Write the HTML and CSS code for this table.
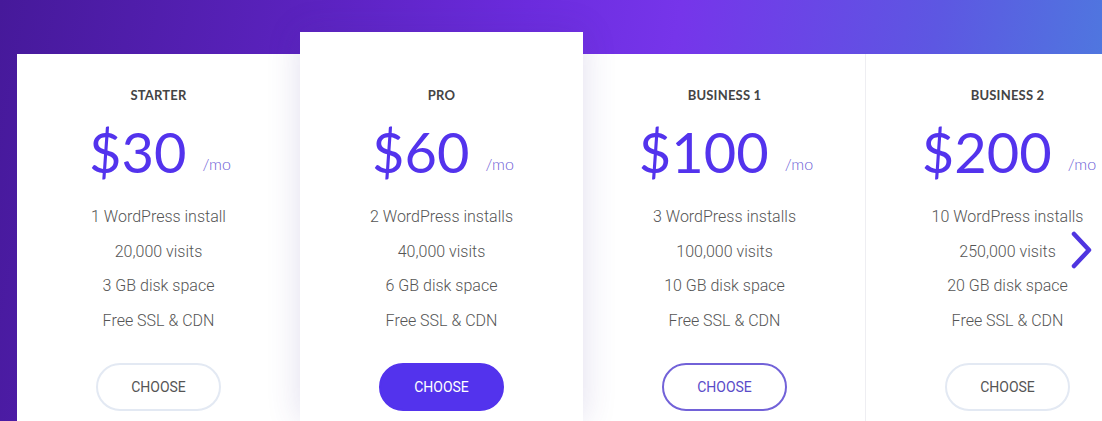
FILE: index.html
```html
<!DOCTYPE html>
<html lang="en">
<head>
    <meta charset="UTF-8">
    <meta name="viewport" content="width=device-width, initial-scale=1.0">
    <title>Pricing</title>
    <link rel="stylesheet" href="styles.css">
</head>
<body>

<main class="plans">
    <section class="plan">
        <h2>STARTER</h2>
        <div class="price">$30<span class="per">/mo</span></div>
        <ul class="features">
            <li>1 WordPress install</li>
            <li>20,000 visits</li>
            <li>3 GB disk space</li>
            <li>Free SSL &amp; CDN</li>
        </ul>
        <button class="choose">CHOOSE</button>
    </section>

    <section class="plan featured">
        <h2>PRO</h2>
        <div class="price">$60<span class="per">/mo</span></div>
        <ul class="features">
            <li>2 WordPress installs</li>
            <li>40,000 visits</li>
            <li>6 GB disk space</li>
            <li>Free SSL &amp; CDN</li>
        </ul>
        <button class="choose filled">CHOOSE</button>
    </section>

    <section class="plan">
        <h2>BUSINESS 1</h2>
        <div class="price">$100<span class="per">/mo</span></div>
        <ul class="features">
            <li>3 WordPress installs</li>
            <li>100,000 visits</li>
            <li>10 GB disk space</li>
            <li>Free SSL &amp; CDN</li>
        </ul>
        <button class="choose outline">CHOOSE</button>
    </section>

    <section class="plan divided">
        <h2>BUSINESS 2</h2>
        <div class="price">$200<span class="per">/mo</span></div>
        <ul class="features">
            <li>10 WordPress installs</li>
            <li>250,000 visits</li>
            <li>20 GB disk space</li>
            <li>Free SSL &amp; CDN</li>
        </ul>
        <button class="choose">CHOOSE</button>
    </section>

    <button class="next" aria-label="Next">
        <svg width="24" height="40" viewBox="0 0 24 40">
            <path d="M5 4 L20 20 L5 36" fill="none" stroke="#4f35e0" stroke-width="4.5" stroke-linecap="round" stroke-linejoin="round"/>
        </svg>
    </button>
</main>

</body>
</html>
```

FILE: styles.css
```css
html, body {
    margin: 0;
    padding: 0;
    height: 100%;
}
body {
    overflow: hidden;
    background: linear-gradient(100deg, #46199a 0%, #5a22bd 25%, #6c2cde 45%, #7635ea 58%, #5d57e2 80%, #4a82de 100%);
    padding: 54px 0 0 17px;
    box-sizing: border-box;
}
.plans {
    position: relative;
    display: flex;
    align-items: flex-start;
    background: #fff;
    height: 100%;
    width: 1085px;
    overflow: visible;
}
.plan {
    flex: 0 0 283px;
    box-sizing: border-box;
    background: #fff;
    text-align: center;
    padding-top: 33px;
    height: 367px;
}
.plan.featured {
    margin-top: -22px;
    padding-top: 55px;
    height: 389px;
    position: relative;
    z-index: 1;
    box-shadow: 0 0 32px rgba(70, 50, 150, 0.16);
}
.plan.divided {
    border-left: 1px solid #eeeef2;
    margin-left: -1px;
    flex-basis: 284px;
}
h2 {
    margin: 0;
    font-family: Lato, "Liberation Sans", sans-serif;
    font-weight: 700;
    font-size: 13px;
    line-height: 16px;
    color: #444;
    letter-spacing: 0.2px;
}
.price {
    margin-top: 19px;
    font-family: Lato, "Liberation Sans", sans-serif;
    font-size: 56px;
    line-height: 60px;
    height: 60px;
    color: #5333ed;
    padding-left: 3px;
}
.per {
    font-size: 16px;
    line-height: 1;
    font-weight: 300;
    margin-left: 16px;
    color: #6a5bd6;
    position: relative;
    top: -3px;
}
.features {
    list-style: none;
    margin: 18px 0 0;
    padding: 0;
    font-family: Roboto, "Liberation Sans", sans-serif;
    font-weight: 300;
    font-size: 16px;
    line-height: 34.5px;
    color: #555;
}
.choose {
    margin-top: 25px;
    width: 125px;
    height: 48px;
    border-radius: 24px;
    border: 2px solid #e3e9f3;
    background: #fff;
    font-family: Roboto, "Liberation Sans", sans-serif;
    font-size: 14px;
    color: #555;
    cursor: pointer;
}
.choose.filled {
    background: #5333ed;
    border-color: #5333ed;
    color: #fff;
}
.choose.outline {
    border-color: #7262d8;
    color: #5a4bc8;
}
.next {
    position: absolute;
    left: 1052px;
    top: 176px;
    z-index: 2;
    background: none;
    border: none;
    padding: 0;
    cursor: pointer;
}
.next svg {
    display: block;
}
```
